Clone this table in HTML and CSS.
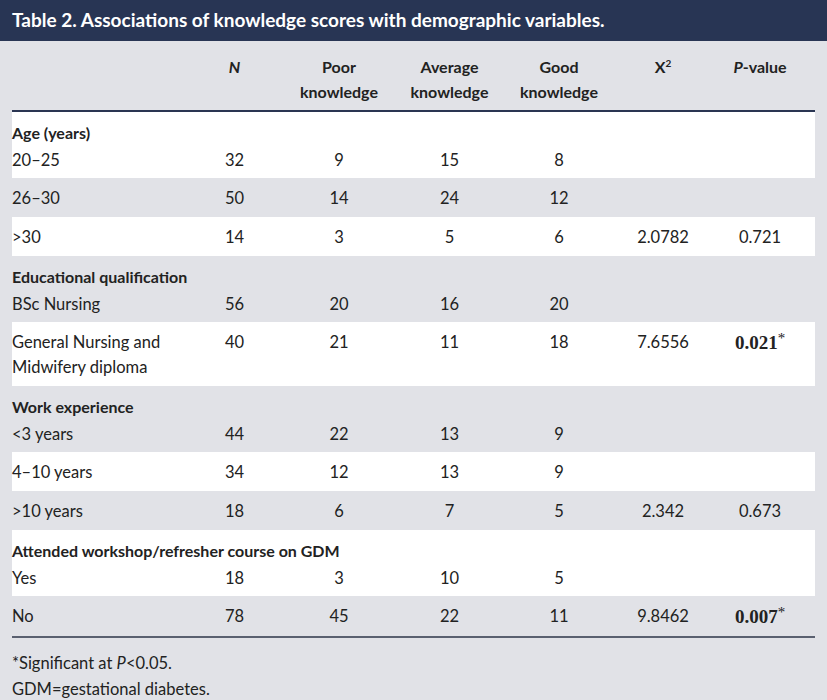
FILE: index.html
```html
<!DOCTYPE html>
<html>
<head>
<meta charset="utf-8">
<link rel="stylesheet" href="styles.css">
</head>
<body>
<div class="caption">Table 2. Associations of knowledge scores with demographic variables.</div>
<table class="data">
  <colgroup>
    <col class="c-label"><col class="c-n"><col class="c-poor"><col class="c-avg"><col class="c-good"><col class="c-chi"><col class="c-p">
  </colgroup>
  <thead>
    <tr>
      <th class="first"></th>
      <th><i>N</i></th>
      <th>Poor<br>knowledge</th>
      <th>Average<br>knowledge</th>
      <th>Good<br>knowledge</th>
      <th>Χ<sup>2</sup></th>
      <th><i>P</i>-value</th>
    </tr>
  </thead>
  <tbody>
    <tr class="group white"><td class="first" colspan="7">Age (years)</td></tr>
    <tr class="sub white"><td class="first">20–25</td><td>32</td><td>9</td><td>15</td><td>8</td><td></td><td></td></tr>
    <tr class="row gray"><td class="first">26–30</td><td>50</td><td>14</td><td>24</td><td>12</td><td></td><td></td></tr>
    <tr class="row white"><td class="first">&gt;30</td><td>14</td><td>3</td><td>5</td><td>6</td><td>2.0782</td><td>0.721</td></tr>

    <tr class="group gray"><td class="first" colspan="7">Educational qualification</td></tr>
    <tr class="sub gray"><td class="first">BSc Nursing</td><td>56</td><td>20</td><td>16</td><td>20</td><td></td><td></td></tr>
    <tr class="row white"><td class="first">General Nursing and<br>Midwifery diploma</td><td>40</td><td>21</td><td>11</td><td>18</td><td>7.6556</td><td><b class="sig">0.021</b><sup class="ast">*</sup></td></tr>

    <tr class="group gray"><td class="first" colspan="7">Work experience</td></tr>
    <tr class="sub gray"><td class="first">&lt;3 years</td><td>44</td><td>22</td><td>13</td><td>9</td><td></td><td></td></tr>
    <tr class="row white"><td class="first">4–10 years</td><td>34</td><td>12</td><td>13</td><td>9</td><td></td><td></td></tr>
    <tr class="row gray"><td class="first">&gt;10 years</td><td>18</td><td>6</td><td>7</td><td>5</td><td>2.342</td><td>0.673</td></tr>

    <tr class="group white"><td class="first" colspan="7">Attended workshop/refresher course on GDM</td></tr>
    <tr class="sub white"><td class="first">Yes</td><td>18</td><td>3</td><td>10</td><td>5</td><td></td><td></td></tr>
    <tr class="row gray last"><td class="first">No</td><td>78</td><td>45</td><td>22</td><td>11</td><td>9.8462</td><td><b class="sig">0.007</b><sup class="ast">*</sup></td></tr>
  </tbody>
</table>
<div class="notes">
  <p>*Significant at <i>P</i>&lt;0.05.</p>
  <p>GDM=gestational diabetes.</p>
</div>
</body>
</html>
```
FILE: styles.css
```css
html, body {
  margin: 0;
  padding: 0;
  background: #e1e2e7;
}
body {
  font-family: "Lato", "Open Sans", sans-serif;
  color: #222;
  font-size: 16.5px;
}
.caption {
  background: #283554;
  color: #fff;
  font-weight: 700;
  font-size: 19px;
  height: 41px;
  line-height: 40px;
  padding-left: 12px;
  box-sizing: border-box;
}
.data {
  margin: 0 12px;
  width: 803px;
  table-layout: fixed;
  border-collapse: collapse;
}
.c-label { width: 181px; }
.c-n { width: 96px; }
.c-poor { width: 113px; }
.c-avg { width: 108px; }
.c-good { width: 111px; }
.c-chi { width: 97px; }
.c-p { width: 97px; }

.data th, .data td {
  text-align: center;
  padding-left: 0;
  padding-right: 13px;
  line-height: 25px;
  vertical-align: top;
}
.data th.first, .data td.first {
  text-align: left;
  padding-right: 0;
}
.data thead th {
  font-weight: 700;
  font-size: 16px;
  padding-top: 13px;
  padding-bottom: 6px;
  height: 50px;
  border-bottom: 2px solid #2a3552;
}
.data thead sup {
  font-size: 10px;
  line-height: 0;
}
.white { background: #fff; }
.gray { background: #e1e2e7; }

.group td {
  font-weight: 700;
  font-size: 16px;
  line-height: 16px;
  padding-top: 13px;
  padding-bottom: 0;
}
.sub td {
  padding-top: 7px;
  padding-bottom: 5px;
}
.row td {
  padding-top: 8px;
  padding-bottom: 6px;
}
.last td {
  border-bottom: 2px solid #5a6070;
}
.sig {
  font-family: "Liberation Serif", serif;
  font-weight: 700;
  font-size: 19px;
}
.ast {
  font-family: "Liberation Serif", serif;
  font-size: 15px;
  line-height: 0;
}
.notes {
  padding: 12px 12px 0;
}
.notes p {
  margin: 0;
  line-height: 26px;
}
```
